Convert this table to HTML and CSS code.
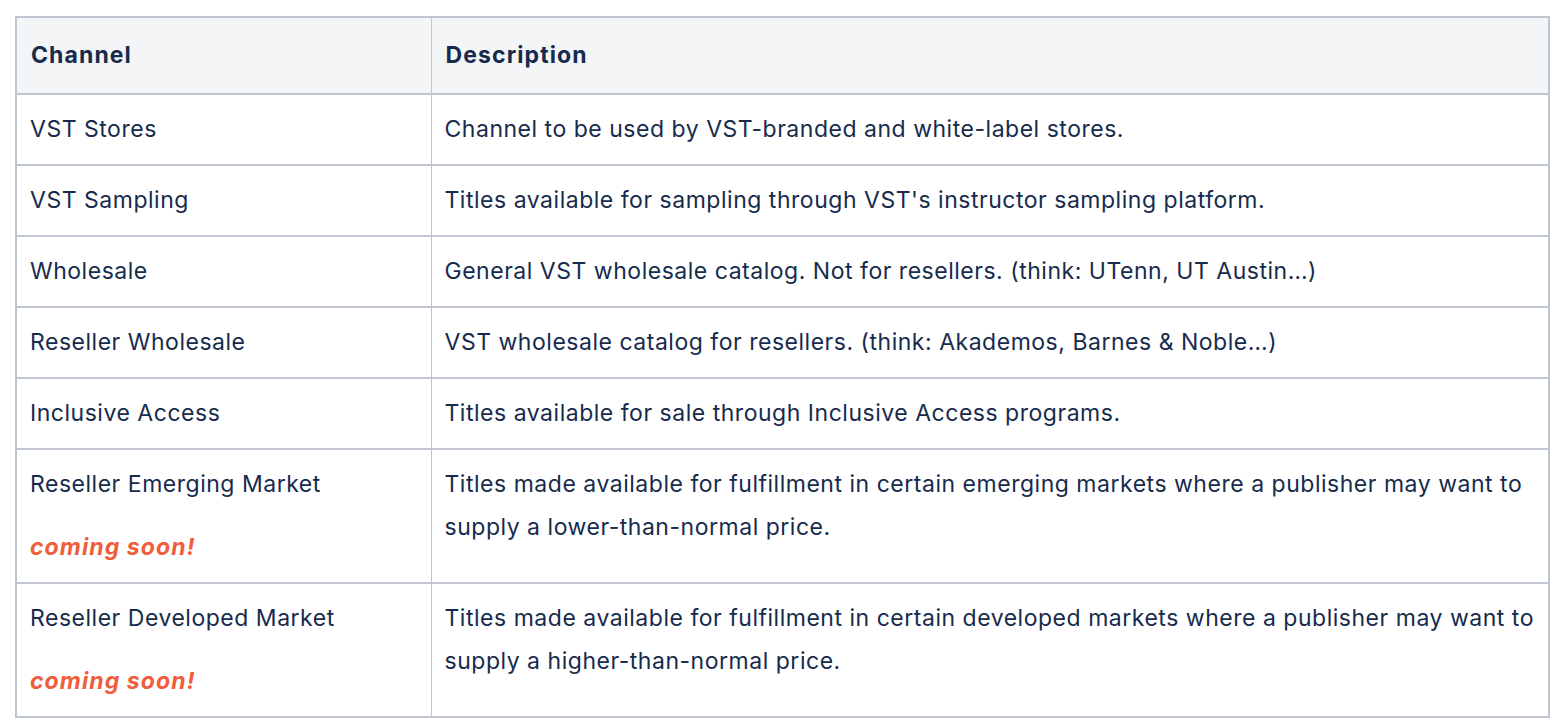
FILE: index.html
```html
<!DOCTYPE html>
<html>
<head>
<meta charset="utf-8">
<link rel="stylesheet" href="styles.css">
</head>
<body>
<table class="channels">
  <thead>
    <tr><th class="col-channel">Channel</th><th>Description</th></tr>
  </thead>
  <tbody>
    <tr><td>VST Stores</td><td>Channel to be used by VST-branded and white-label stores.</td></tr>
    <tr><td>VST Sampling</td><td>Titles available for sampling through VST's instructor sampling platform.</td></tr>
    <tr><td>Wholesale</td><td>General VST wholesale catalog. Not for resellers. (think: UTenn, UT Austin…)</td></tr>
    <tr><td>Reseller Wholesale</td><td>VST wholesale catalog for resellers. (think: Akademos, Barnes &amp; Noble…)</td></tr>
    <tr><td>Inclusive Access</td><td>Titles available for sale through Inclusive Access programs.</td></tr>
    <tr>
      <td><p>Reseller Emerging Market</p><p class="soon">coming soon!</p></td>
      <td><p>Titles made available for fulfillment in certain emerging markets where a publisher may want to supply a lower-than-normal price.</p></td>
    </tr>
    <tr>
      <td><p>Reseller Developed Market</p><p class="soon">coming soon!</p></td>
      <td><p>Titles made available for fulfillment in certain developed markets where a publisher may want to supply a higher-than-normal price.</p></td>
    </tr>
  </tbody>
</table>
</body>
</html>
```
FILE: styles.css
```css
html, body {
  margin: 0;
  padding: 0;
  background: #ffffff;
}
body {
  padding: 16px 15px;
  font-family: Inter, "Noto Sans", sans-serif;
  font-size: 23px;
  letter-spacing: 0.52px;
  color: #172b4d;
}
.channels {
  width: 1535px;
  border-collapse: collapse;
  border: 2px solid #c1c7d0;
  table-layout: fixed;
}
.channels th,
.channels td {
  text-align: left;
  vertical-align: top;
  padding: 13px 4px 13px 13px;
  line-height: 43px;
  border-top: 2px solid #c1c7d0;
  border-bottom: 2px solid #c1c7d0;
  border-left: 1px solid #c1c7d0;
  border-right: 1px solid #c1c7d0;
}
.channels th {
  background: #f4f5f7;
  font-weight: 700;
  letter-spacing: 1.1px;
  padding-top: 16px;
  padding-bottom: 16px;
  padding-left: 14px;
}
.channels .col-channel {
  width: 415px;
  box-sizing: border-box;
}
.channels p {
  margin: 0;
}
.channels p + p {
  margin-top: 20px;
}
.channels .soon {
  color: #f05d3b;
  font-weight: 700;
  font-style: italic;
  letter-spacing: 1.1px;
}
```
